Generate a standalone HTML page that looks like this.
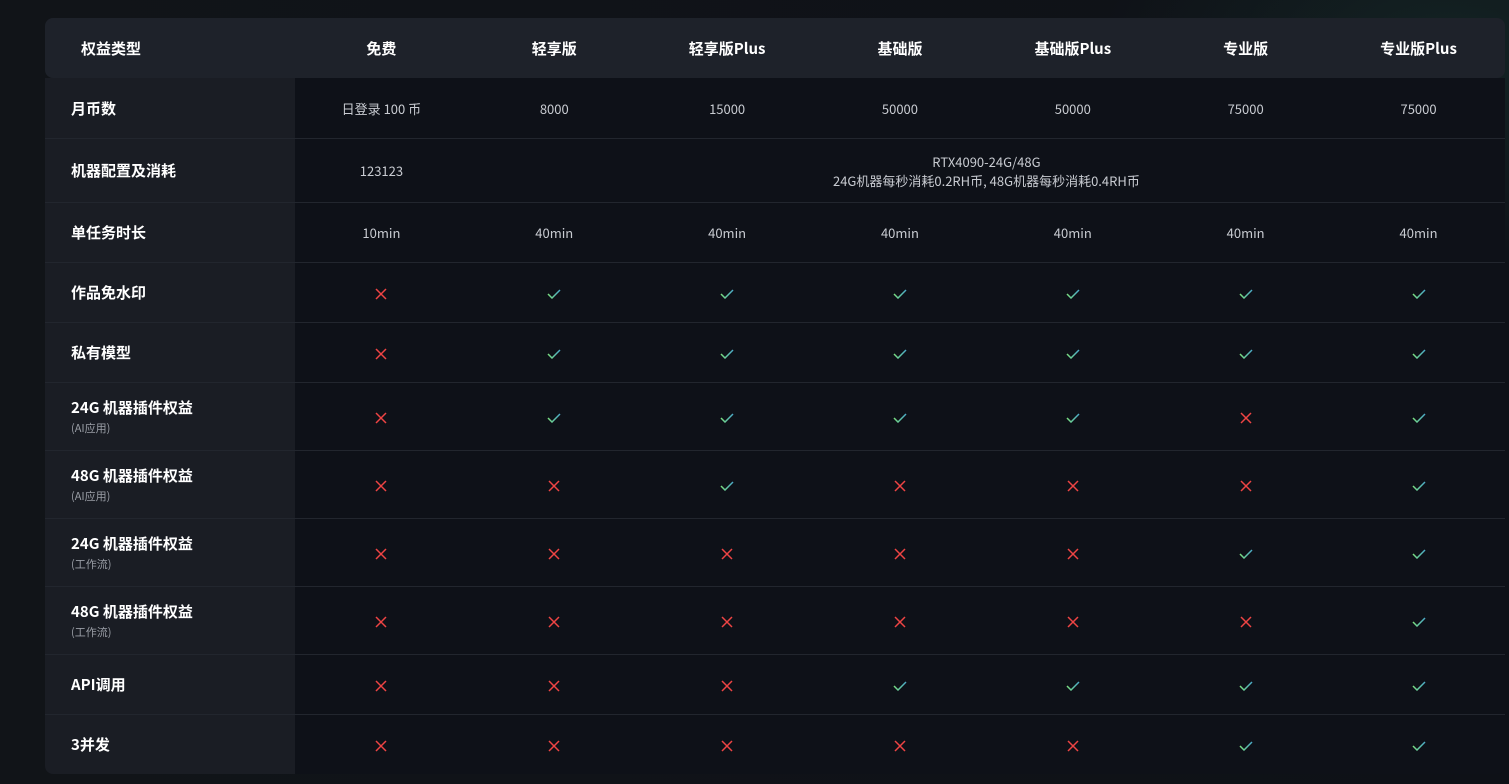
<!DOCTYPE html>
<html><head><meta charset="utf-8"><style>
*{margin:0;padding:0;box-sizing:border-box}
body{width:1509px;height:784px;overflow:hidden;background:#0f1217;font-family:"Noto Sans CJK SC","Liberation Sans",sans-serif;position:relative}
.bg{position:absolute;inset:0;background:radial-gradient(ellipse 500px 300px at 1450px 60px,rgba(30,70,60,0.35),transparent 70%),linear-gradient(90deg,#111418 0,#0e1117 100%)}
.hd{position:absolute;left:45px;top:18px;width:1460px;height:60px;background:#1e222a;border-radius:8px}
table{position:absolute;left:45px;top:18px;width:1460px;border-collapse:separate;border-spacing:0;table-layout:fixed;border-radius:8px;overflow:hidden}
col.f{width:250px}
th{height:60px;color:#fff;font-size:15px;font-weight:bold;text-align:center}
th:first-child{text-align:left;padding-left:36px}
td{text-align:center;color:#c8cbd1;font-size:13px;border-top:1px solid #22262e;background:#0e1118}
tr:nth-child(2) td{border-top:none}
td.h{background:#1a1d24;text-align:left;padding-left:26px;color:#fff;font-size:15px;font-weight:bold}
td.h small{display:block;font-size:11px;color:#9a9ea6;font-weight:normal;margin-top:2px}
.r60{height:60px}.r64{height:64px}.r68{height:68px}
svg{vertical-align:middle}
</style></head><body><div class="bg"></div><div class="hd"></div>
<svg width="0" height="0" style="position:absolute"><defs><linearGradient id="g" x1="0" x2="1"><stop offset="0" stop-color="#7be07f"/><stop offset="1" stop-color="#4aa9c9"/></linearGradient></defs></svg>
<table>
<colgroup><col class="f"><col><col><col><col><col><col><col></colgroup>
<tr><th>权益类型</th><th>免费</th><th>轻享版</th><th>轻享版Plus</th><th>基础版</th><th>基础版Plus</th><th>专业版</th><th>专业版Plus</th></tr>
<tr class="r60"><td class="h">月币数</td><td>日登录 100 币</td><td>8000</td><td>15000</td><td>50000</td><td>50000</td><td>75000</td><td>75000</td></tr>
<tr class="r64"><td class="h">机器配置及消耗</td><td>123123</td><td colspan="6" style="line-height:19px">RTX4090-24G/48G<br>24G机器每秒消耗0.2RH币, 48G机器每秒消耗0.4RH币</td></tr>
<tr class="r60"><td class="h">单任务时长</td><td>10min</td><td>40min</td><td>40min</td><td>40min</td><td>40min</td><td>40min</td><td>40min</td></tr>
</table>
<script>
var V='<svg width="14" height="10" viewBox="0 0 14 10"><path d="M1 5l4 4 8-8" fill="none" stroke="url(#g)" stroke-width="1.5"/></svg>';
var X='<svg width="12" height="12" viewBox="0 0 12 12"><path d="M1 1l10 10M11 1L1 11" stroke="#ef4444" stroke-width="1.5"/></svg>';
var rows=[["作品免水印","","xvvvvvv",60],["私有模型","","xvvvvvv",60],["24G 机器插件权益","(AI应用)","xvvvvxv",68],["48G 机器插件权益","(AI应用)","xxvxxxv",68],["24G 机器插件权益","(工作流)","xxxxxvv",68],["48G 机器插件权益","(工作流)","xxxxxxv",68],["API调用","","xxxvvvv",60],["3并发","","xxxxxvv",60]];
var t=document.querySelector('table');
rows.forEach(function(r){var tr=document.createElement('tr');tr.className='r'+r[3];
var h='<td class="h">'+r[0]+(r[1]?'<small>'+r[1]+'</small>':'')+'</td>';
for(var i=0;i<7;i++)h+='<td>'+(r[2][i]=='v'?V:X)+'</td>';tr.innerHTML=h;t.appendChild(tr);});
</script>
</body></html>
